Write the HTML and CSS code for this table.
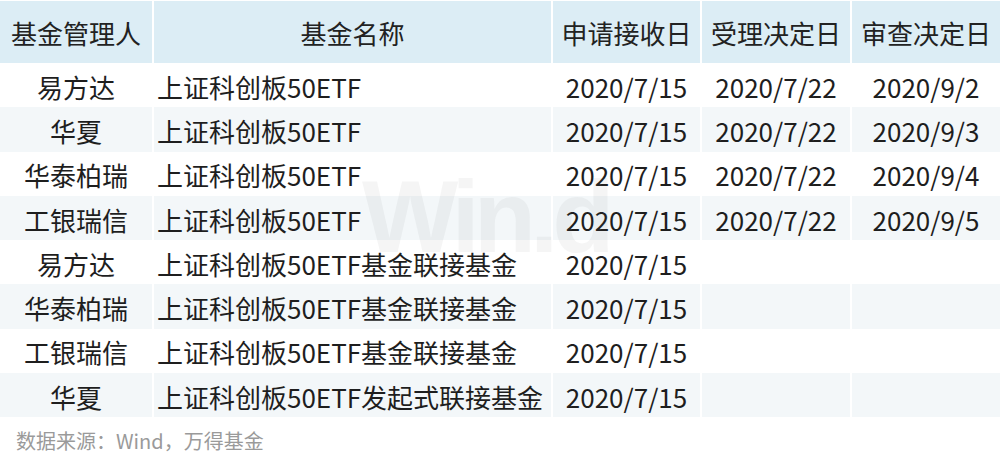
FILE: index.html
```html
<!DOCTYPE html>
<html lang="zh-CN">
<head>
<meta charset="utf-8">
<link rel="stylesheet" href="styles.css">
</head>
<body>
<div class="page">
  <div class="table">
    <div class="cell head">基金管理人</div>
    <div class="cell head">基金名称</div>
    <div class="cell head">申请接收日</div>
    <div class="cell head">受理决定日</div>
    <div class="cell head">审查决定日</div>

    <div class="cell c">易方达</div>
    <div class="cell l">上证科创板50ETF</div>
    <div class="cell c">2020/7/15</div>
    <div class="cell c">2020/7/22</div>
    <div class="cell c">2020/9/2</div>

    <div class="cell c alt">华夏</div>
    <div class="cell l alt">上证科创板50ETF</div>
    <div class="cell c alt">2020/7/15</div>
    <div class="cell c alt">2020/7/22</div>
    <div class="cell c alt">2020/9/3</div>

    <div class="cell c">华泰柏瑞</div>
    <div class="cell l">上证科创板50ETF</div>
    <div class="cell c">2020/7/15</div>
    <div class="cell c">2020/7/22</div>
    <div class="cell c">2020/9/4</div>

    <div class="cell c alt">工银瑞信</div>
    <div class="cell l alt">上证科创板50ETF</div>
    <div class="cell c alt">2020/7/15</div>
    <div class="cell c alt">2020/7/22</div>
    <div class="cell c alt">2020/9/5</div>

    <div class="cell c">易方达</div>
    <div class="cell l">上证科创板50ETF基金联接基金</div>
    <div class="cell c">2020/7/15</div>
    <div class="cell c"></div>
    <div class="cell c"></div>

    <div class="cell c alt">华泰柏瑞</div>
    <div class="cell l alt">上证科创板50ETF基金联接基金</div>
    <div class="cell c alt">2020/7/15</div>
    <div class="cell c alt"></div>
    <div class="cell c alt"></div>

    <div class="cell c">工银瑞信</div>
    <div class="cell l">上证科创板50ETF基金联接基金</div>
    <div class="cell c">2020/7/15</div>
    <div class="cell c"></div>
    <div class="cell c"></div>

    <div class="cell c alt">华夏</div>
    <div class="cell l alt">上证科创板50ETF发起式联接基金</div>
    <div class="cell c alt">2020/7/15</div>
    <div class="cell c alt"></div>
    <div class="cell c alt"></div>
  </div>
  <div class="source">数据来源：Wind，万得基金</div>
  <div class="watermark">Win.d</div>
</div>
</body>
</html>
```

FILE: styles.css
```css
html, body {
  margin: 0;
  padding: 0;
  background: #ffffff;
}

.page {
  position: relative;
  width: 1000px;
  height: 464px;
  overflow: hidden;
  font-family: "Noto Sans CJK SC", "Noto Sans", sans-serif;
  color: #1e1e1e;
}

.table {
  display: grid;
  grid-template-columns: 152px 397px 147px 148px 148px;
  grid-template-rows: 62px repeat(8, 44.3px);
  column-gap: 2px;
  padding-top: 1px;
}

.cell {
  display: flex;
  align-items: center;
  font-size: 26px;
  line-height: 1;
  white-space: nowrap;
  padding-top: 3px;
}

.head {
  justify-content: center;
  background: #dcedf5;
  color: #222;
  padding-top: 2px;
}

.c {
  justify-content: center;
}

.l {
  justify-content: flex-start;
  padding-left: 3px;
}

.alt {
  background: #f3f7f9;
}

.source {
  padding: 12px 0 0 16px;
  font-size: 20px;
  line-height: 24px;
  color: #9a9a9a;
}

.watermark {
  position: absolute;
  left: 362px;
  top: 166px;
  font-family: "Liberation Sans", sans-serif;
  font-weight: bold;
  font-size: 102px;
  letter-spacing: -6px;
  line-height: 1;
  color: rgba(120, 120, 120, 0.07);
  pointer-events: none;
}
```
